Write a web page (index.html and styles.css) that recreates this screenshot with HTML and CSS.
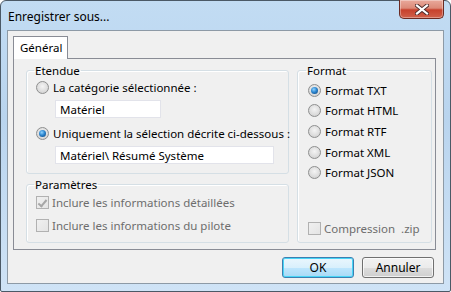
FILE: index.html
```html
<!DOCTYPE html>
<html lang="fr">
  <head>
    <meta charset="UTF-8" />
    <title>Enregistrer sous...</title>
    <link rel="stylesheet" href="styles.css">
  </head>
  <body>
    <div class="window">
      <div class="titlebar">
        <span class="title">Enregistrer sous...</span>
        <span class="close-btn">
          <svg width="14" height="11" viewBox="0 0 14 11">
            <path d="M2 1.5 L12 9.5 M12 1.5 L2 9.5" stroke="#4a2a2a" stroke-width="4" stroke-linecap="square" />
            <path d="M2 1.5 L12 9.5 M12 1.5 L2 9.5" stroke="#ffffff" stroke-width="2.2" stroke-linecap="square" />
          </svg>
        </span>
      </div>
      <div class="client">
        <div class="tabs">
          <span class="tab active">Général</span>
        </div>
        <div class="tab-page">
          <div class="col-left">
            <fieldset class="group group-scope">
              <legend>Etendue</legend>
              <label class="option">
                <span class="radio"></span>La catégorie sélectionnée :
              </label>
              <div class="text-field short">Matériel</div>
              <label class="option">
                <span class="radio checked"></span>Uniquement la sélection décrite ci-dessous :
              </label>
              <div class="text-field long">Matériel\ Résumé Système</div>
            </fieldset>
            <fieldset class="group group-params">
              <legend>Paramètres</legend>
              <label class="option disabled">
                <span class="checkbox checked"></span>Inclure les informations détaillées
              </label>
              <label class="option disabled">
                <span class="checkbox"></span>Inclure les informations du pilote
              </label>
            </fieldset>
          </div>
          <fieldset class="group group-format">
            <legend>Format</legend>
            <div class="format-list">
              <label class="option"><span class="radio checked"></span>Format TXT</label>
              <label class="option"><span class="radio"></span>Format HTML</label>
              <label class="option"><span class="radio"></span>Format RTF</label>
              <label class="option"><span class="radio"></span>Format XML</label>
              <label class="option"><span class="radio"></span>Format JSON</label>
            </div>
            <label class="option disabled zip">
              <span class="checkbox"></span>Compression&nbsp; .zip
            </label>
          </fieldset>
        </div>
        <div class="actions">
          <button class="btn default">OK</button>
          <button class="btn">Annuler</button>
        </div>
      </div>
    </div>
  </body>
</html>
```

FILE: styles.css
```css
body {
  margin: 0;
  font-family: "Noto Sans", "Open Sans", sans-serif;
  font-size: 11.5px;
  color: #000;
  background: #fff;
}

.window {
  width: 451px;
  height: 292px;
  box-sizing: border-box;
  border: 1px solid #4b5966;
  border-radius: 6px 6px 2px 2px;
  background: linear-gradient(180deg, #c2dcf3 0%, #b9d4ee 40%, #cfe3f6 100%);
  display: flex;
  flex-direction: column;
}

.titlebar {
  height: 29px;
  display: flex;
  justify-content: space-between;
  align-items: flex-start;
  padding-left: 7px;
}

.title {
  margin-top: 7px;
  font-size: 12px;
  color: #000;
}

.close-btn {
  width: 45px;
  height: 19px;
  margin-right: 6px;
  margin-top: -1px;
  box-sizing: border-box;
  border: 1px solid #6b2a22;
  border-top: none;
  border-radius: 0 0 5px 5px;
  background: linear-gradient(180deg, #e9a99b 0%, #dc8a78 45%, #c7412c 55%, #d0604a 100%);
  box-shadow: inset 0 0 0 1px rgba(255, 255, 255, 0.35);
  display: flex;
  align-items: center;
  justify-content: center;
}

.client {
  flex: 1;
  margin: 0 6px 7px 6px;
  border: 1px solid #8d9aa6;
  background: #f0f0f0;
  display: flex;
  flex-direction: column;
  padding: 5px 7px 0 5px;
}

.tabs {
  display: flex;
  height: 22px;
}

.tab {
  height: 23px;
  box-sizing: border-box;
  padding: 3px 5px 0 6px;
  border: 1px solid #898c95;
  border-bottom: none;
  background: #fff;
  position: relative;
  z-index: 1;
  margin-bottom: -1px;
}

.tab-page {
  height: 192px;
  box-sizing: border-box;
  border: 1px solid #898c95;
  background: #f0f0f0;
  display: flex;
  padding: 3px 3px 0 12px;
  gap: 8px;
}

.col-left {
  display: flex;
  flex-direction: column;
  gap: 2px;
}

.group {
  margin: 0;
  border: 1px solid #d5dfe5;
  border-radius: 3px;
  box-shadow: inset 1px 1px 0 #fff;
  padding: 0 0 0 9px;
  min-width: 0;
}

.group legend {
  padding: 0 1px;
  margin-left: -2px;
  line-height: 17px;
}

.group-scope {
  width: 263px;
  height: 112px;
  box-sizing: border-box;
}

.group-params {
  width: 263px;
  height: 67px;
  box-sizing: border-box;
  padding-top: 0;
}

.group-format {
  width: 137px;
  height: 181px;
  box-sizing: border-box;
  display: flex;
  flex-direction: column;
  padding-left: 10px;
}

.format-list {
  display: flex;
  flex-direction: column;
  gap: 4.7px;
  margin-top: 3px;
}

.option {
  display: flex;
  align-items: center;
  height: 16px;
  white-space: nowrap;
}

.option.disabled {
  color: #6d6d6d;
}

.group-params .option {
  height: 23px;
}

.group-params .option:first-of-type {
  margin-top: -2px;
}

.zip {
  margin-top: auto;
  margin-bottom: 6px;
}

.radio {
  width: 13px;
  height: 13px;
  box-sizing: border-box;
  border-radius: 50%;
  border: 1px solid #8e8f8f;
  background: radial-gradient(circle at 50% 40%, #f4f4f4 0%, #dcdcdc 60%, #c9c9c9 100%);
  margin-right: 4px;
  flex-shrink: 0;
  display: flex;
  align-items: center;
  justify-content: center;
}

.radio.checked::after {
  content: "";
  width: 7px;
  height: 7px;
  border-radius: 50%;
  background: radial-gradient(circle at 40% 35%, #8fd3ff 0%, #2c86d0 45%, #0b3e72 100%);
}

.checkbox {
  width: 13px;
  height: 13px;
  box-sizing: border-box;
  border: 1px solid #b1b1b1;
  background: linear-gradient(135deg, #f0f0f0 0%, #e4e4e4 100%);
  margin-right: 3px;
  flex-shrink: 0;
  position: relative;
}

.checkbox.checked::after {
  content: "";
  position: absolute;
  left: 3px;
  top: 1px;
  width: 3px;
  height: 7px;
  border: solid #a6a6a6;
  border-width: 0 2px 2px 0;
  transform: rotate(40deg);
}

.text-field {
  height: 18px;
  box-sizing: border-box;
  margin: 5px 0 7px 19px;
  padding: 1px 0 0 4px;
  border: 1px solid #e2e3ea;
  background: #fff;
  line-height: 15px;
}

.text-field.short {
  width: 106px;
}

.text-field.long {
  width: 219px;
}

.actions {
  display: flex;
  justify-content: flex-end;
  gap: 8px;
  padding: 7px 2px 0 0;
}

.btn {
  width: 72px;
  height: 21px;
  box-sizing: border-box;
  font-family: inherit;
  font-size: 12px;
  color: #000;
  border: 1px solid #707070;
  border-radius: 3px;
  background: linear-gradient(180deg, #f2f2f2 0%, #ebebeb 50%, #dddddd 51%, #cfcfcf 100%);
  box-shadow: inset 0 0 0 1px rgba(255, 255, 255, 0.7);
  padding: 0;
}

.btn.default {
  border-color: #3c7fb1;
  background: linear-gradient(180deg, #eaf6fd 0%, #d9f0fc 50%, #bee6fd 51%, #a7d9f5 100%);
  box-shadow: inset 0 0 0 1px #48d5f6;
}
```
